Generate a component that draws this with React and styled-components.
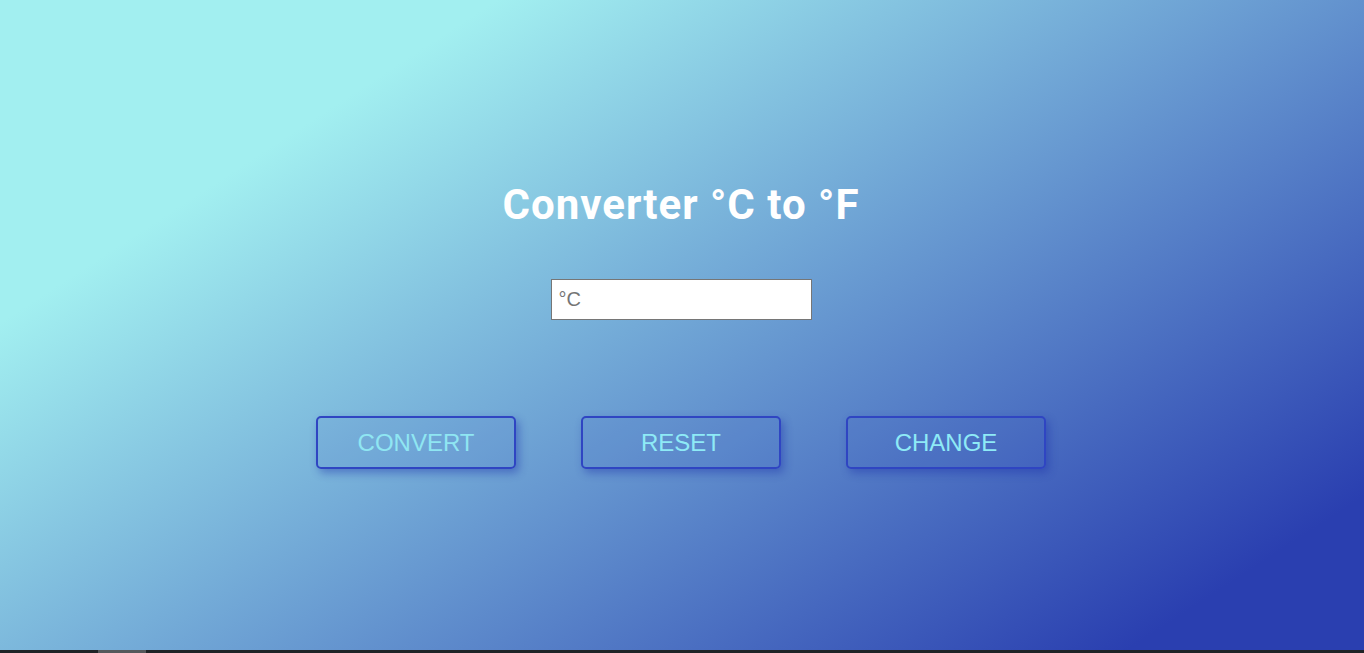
import styled, { createGlobalStyle } from "styled-components";
import { useState } from "react";

const GlobalStyle = createGlobalStyle`
  html, body {
    margin: 0;
    padding: 0;
    overflow: hidden;
  }
  body {
    font-family: "Liberation Sans", Arial, sans-serif;
  }
`;

export default function App() {
  const [celsius, setCelsius] = useState("");

  return (
    <>
      <GlobalStyle />
      <Page>
        <Main>
          <Title>Converter °C to °F</Title>
          {/* Input */}
          <TempInput
            type="text"
            placeholder="°C"
            value={celsius}
            onChange={(e) => {
              setCelsius(e.target.value);
            }}
          />
          {/* Buttons */}
          <BtnRow>
            <ActionButton dim>CONVERT</ActionButton>
            <ActionButton>RESET</ActionButton>
            <ActionButton>CHANGE</ActionButton>
          </BtnRow>
        </Main>
        <ScrollTrack>
          <ScrollThumb />
        </ScrollTrack>
      </Page>
    </>
  );
}

const Page = styled.div`
  width: 100vw;
  height: 653px;
  display: flex;
  flex-direction: column;
`;

const Main = styled.main`
  height: 650px;
  display: flex;
  flex-direction: column;
  align-items: center;
  padding: 180px 2px 0 0;
  box-sizing: border-box;
  background: linear-gradient(147deg, #a2eff0 21%, #2a3fb0 90%);
`;

const Title = styled.h1`
  margin: 0;
  font-family: Roboto, "Noto Sans", sans-serif;
  font-size: 42px;
  line-height: 50px;
  font-weight: 700;
  letter-spacing: 1px;
  color: #ffffff;
`;

const TempInput = styled.input`
  margin-top: 49px;
  width: 261px;
  height: 41px;
  box-sizing: border-box;
  padding: 0 7px;
  border: 1px solid #767676;
  background: #ffffff;
  font-family: "Liberation Sans", Arial, sans-serif;
  font-size: 20px;
  color: #333;
  outline: none;

  &::placeholder {
    color: #757575;
  }
`;

const BtnRow = styled.div`
  margin-top: 96px;
  display: flex;
  gap: 65px;
`;

const ActionButton = styled.button`
  width: 200px;
  height: 53px;
  box-sizing: border-box;
  border: 2px solid #2f45c2;
  border-radius: 5px;
  background: rgba(50, 80, 190, 0.08);
  box-shadow: 3px 4px 8px rgba(30, 50, 170, 0.45);
  font-family: "Liberation Sans", Arial, sans-serif;
  font-size: 24px;
  color: ${(p) => (p.dim ? "#8fe6f2" : "#8eeaf6")};
  cursor: pointer;
`;

const ScrollTrack = styled.div`
  height: 3px;
  background: #1f2427;
  display: flex;
`;

const ScrollThumb = styled.div`
  margin-left: 98px;
  width: 48px;
  background: #55595c;
`;
